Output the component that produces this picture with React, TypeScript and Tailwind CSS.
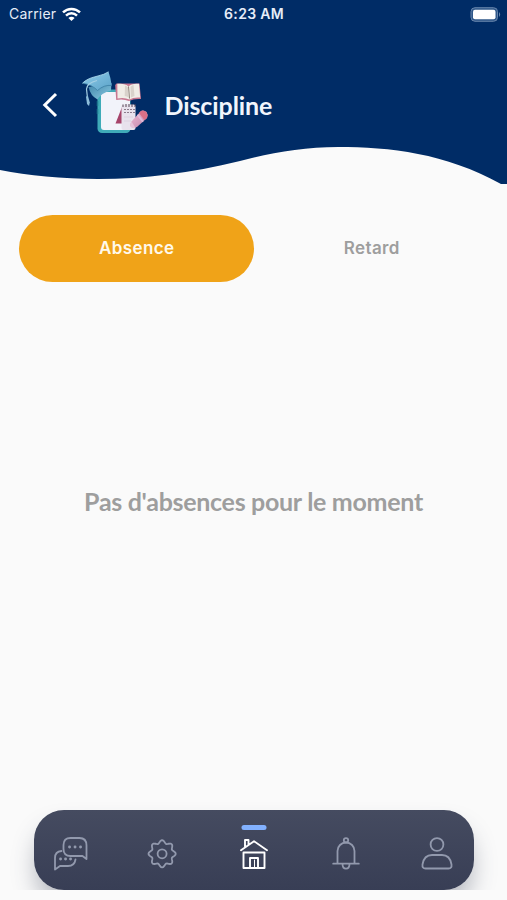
import React from "react";

const GEAR_OUTLINE =
  Array.from({ length: 97 }, (_, i) => {
    const angle = (i / 96) * Math.PI * 2;
    const radius = 12.1 + 1.5 * Math.cos(angle * 8);
    const x = 17.1 + radius * Math.sin(angle);
    const y = 17.8 - radius * Math.cos(angle);
    return `${i === 0 ? "M" : "L"}${x.toFixed(2)} ${y.toFixed(2)}`;
  }).join("") + "Z";

function StatusBar() {
  return (
    <div className="grid h-7 grid-cols-3 items-center pl-[9px] pr-[6px] font-[Inter,'Liberation_Sans',sans-serif] text-[14px] leading-none text-[#e6edf8]">
      <div className="flex items-center gap-[6px]">
        <span className="tracking-[0.2px]">Carrier</span>
        <svg width="19" height="15" viewBox="0 0 19 15" fill="none" stroke="#fff" strokeWidth="2.5">
          <path d="M1 5.400C5.800.8 13.200.8 18 5.400" />
          <path d="M4 8.600c3.200-3 7.800-3 11 0" />
          <path d="M6.400 10.900c1.800-1.500 4.400-1.500 6.200 0L9.500 14z" fill="#fff" stroke="none" />
        </svg>
      </div>
      <span className="-ml-[2px] whitespace-nowrap text-center font-semibold tracking-[0.3px]">6:23 AM</span>
      <svg className="justify-self-end" width="31" height="15" viewBox="0 0 31 15">
        <rect x="1" y=".7" width="26.500" height="13.600" rx="4" fill="#30588a" stroke="#6684ab" />
        <rect x="3" y="2.700" width="22.500" height="9.600" rx="2" fill="#fff" />
        <path d="M29 5v5q2.300-2.500 0-5z" fill="#6684ab" />
      </svg>
    </div>
  );
}

function SchoolArt() {
  return (
    <svg width="70" height="66" viewBox="0 0 70 66">
      <defs>
        <linearGradient id="cap" x1="0" y1="0" x2="1" y2="1">
          <stop offset="0" stopColor="#8fcbe8" />
          <stop offset="1" stopColor="#5ba3c9" />
        </linearGradient>
        <linearGradient id="capBase" x1="0" y1="0" x2="1" y2="1">
          <stop offset="0" stopColor="#3f84a9" />
          <stop offset="1" stopColor="#8ccbe3" />
        </linearGradient>
        <linearGradient id="pencil" x1="0" y1="0" x2="1" y2="1">
          <stop offset="0" stopColor="#f0bcd4" />
          <stop offset="1" stopColor="#c285ab" />
        </linearGradient>
      </defs>
      <rect x="16.500" y="18.500" width="33" height="43.500" rx="4.500" fill="#3fabb8" />
      <rect x="20" y="21" width="29" height="38" rx="3" fill="#f2f3fa" />
      <path d="M16.500 30v5M16.500 38v5" stroke="#1e7790" strokeWidth="1.500" />
      <path d="M41 36 34.500 52.500H42z" fill="#a6436a" />
      <path d="M7.500 16Q9.500 25 16.500 28.500 20 22 30 19.500L30.500 12z" fill="url(#capBase)" />
      <path d="M1.500 12.200Q6 7.500 15 5.500 24 3.500 27.500.8 29.500 6 30.700 14.500 23 13.500 16.500 19.500 11 13.500 1.500 12.200z" fill="url(#cap)" />
      <path d="M1.500 12.200Q11 13.500 16.500 19.500 23 13.500 30.700 14.500" fill="none" stroke="#3b7fa5" strokeWidth=".8" />
      <path d="M1.500 12.200Q6 7.500 15 5.500 24 3.500 27.500.8" fill="none" stroke="#b4e0f1" strokeWidth=".8" />
      <path d="M16 9.500Q6 12 5.500 18l1 9" fill="none" stroke="#a5cfe4" strokeWidth="1.200" />
      <path d="m5 25.500 2-.5 1.800 6.500-.8 3.500-2-2z" fill="#8dbedb" />
      <path d="m34.200 14 1.300-1.500h23l1.500 15.500q-7-.5-12 2-6-2.500-12.800-1z" fill="#c87791" />
      <path d="M36.300 12.800Q44 12 47.500 15.500 51 12 58 12.800l1.200 13.700q-7-.5-10.700 2-5.500-2.500-12-1z" fill="#f0ece6" />
      <path d="m47.500 15.500 1 12" stroke="#8c8279" />
      <path d="M44 14.500q2 .5 3 2l.7 10q-1.700-1.200-4-1.500zM49.500 16q1-1.500 3-2l1 11-3.500 1.500z" fill="#cfc7bf" opacity=".7" />
      <rect x="40.500" y="33.500" width="14" height="25.500" rx="2" fill="#e8e2ed" />
      <path d="M42 36v-2.500m3 2.500v-3m3 3v-3m3 3v-3m3 3v-3" stroke="#554454" />
      <path d="M43 38.500h11M43 41.500h11" stroke="#8c7c8d" strokeDasharray="2 1" />
      <path d="M43 46h9M43 50h7" stroke="#d3cbd9" strokeWidth=".6" />
      <path d="M50.500 50.500 60 40q2.500-1.500 5.500 1 2 3 .5 6L56 56q-3 1.500-6 0-1.500-2.500.5-5.500z" fill="url(#pencil)" />
      <path d="M58 42l2-2q2.500-1.500 5.500 1 2 3 .5 6l-2.500 2.200z" fill="#da7188" />
      <path d="m56.500 43.700 5.500 7" stroke="#e0bddb" strokeWidth="1.800" />
      <path d="m50.500 50.500 4 6.500q-2.500.5-4.500-1-1.500-2.500.5-5.500z" fill="#e6c3d9" />
    </svg>
  );
}

function Header() {
  return (
    <header className="relative h-[185px] shrink-0">
      <svg className="absolute inset-0" width="507" height="185" viewBox="0 0 507 185">
        <path d="M0 0H507V184H501C445 153 390 147 338 147C303 147 270 153 240 161C190 173 145 179 98 179C62 179 28 175.500 0 170Z" fill="#002c66" />
      </svg>
      <div className="relative">
        <StatusBar />
        <div className="flex items-center pl-[42px] pt-[43px]">
          <svg className="mt-[2px]" width="16" height="26" viewBox="0 0 16 26" fill="none" stroke="#fff" strokeWidth="3">
            <path d="M14 2 2.800 13 14 24" />
          </svg>
          <div className="ml-[23px]">
            <SchoolArt />
          </div>
          <h1 className="ml-[13.500px] mt-[2px] font-[Lato,sans-serif] text-[25px] font-bold leading-8 tracking-[-0.1px] text-[#f1f5fc]">Discipline</h1>
        </div>
      </div>
    </header>
  );
}

function Icon({ children, active = false }: { children: React.ReactNode; active?: boolean }) {
  return (
    <button className={active ? "text-white" : "text-[#9299ad]"}>
      <svg width="36" height="36" viewBox="0 0 36 36" fill="none" stroke="currentColor" strokeWidth="1.800" strokeLinecap="round" strokeLinejoin="round">
        {children}
      </svg>
    </button>
  );
}

function BottomNav() {
  return (
    <div className="mb-[10px] shrink-0 overflow-hidden pl-[34px] pr-[33px] pt-[30px]">
      <nav className="relative flex h-20 items-start justify-between rounded-[30px] bg-linear-to-b from-[#454b60] to-[#383e55] px-[19px] pt-[26px] shadow-[0_16px_24px_-3px_rgba(56,62,85,0.38)]">
        <Icon>
          <path d="M17.500 2h9Q33.500 2 33.500 9.500V23l-4-3H17.500Q10.500 20 10.500 13V9q0-7 7-7z" />
          <path d="M8.500 15Q2 15.500 2 22v11.500l5-3.500h8q6.500 0 7.500-6.500" />
          <path d="M16.500 11h.1m5.400 0h.1m5.400 0h.1M7.500 23h.1m4.900 0h.1m4.900 0h.1" strokeWidth="2.800" />
        </Icon>
        <Icon>
          <circle cx="17.100" cy="17.800" r="4.500" />
          <path d={GEAR_OUTLINE} />
        </Icon>
        <Icon active>
          <path d="M5 14.200 18 5.200l13 9M9 11V4h3.500v4.500" strokeWidth="1.900" />
          <path d="M7.500 16.500h21V32h-21zM14 32V22h8v10" strokeWidth="1.900" />
          <path d="M18.500 24v8" strokeWidth="1" />
        </Icon>
        <Icon>
          <circle cx="18" cy="4.300" r="2.200" />
          <path d="M9.500 27.500V15a8.500 8.500 0 0 1 17 0v12.500M5.200 27.700h25.600M14.500 28q0 4.700 3.500 4.700t3.500-4.700" />
        </Icon>
        <Icon>
          <circle cx="18" cy="8.500" r="6.400" />
          <path d="M6.500 32.500Q3 32.500 3.500 28.500 5 19 13 19h10q8 0 9.500 9.500Q33 32.500 29.500 32.500z" />
        </Icon>
        <span className="absolute left-1/2 top-[14.500px] h-[5px] w-[25px] -translate-x-1/2 rounded-full bg-[#82b1ff]" />
      </nav>
    </div>
  );
}

export default function App() {
  return (
    <div className="flex h-[900px] w-[507px] flex-col overflow-hidden bg-[#fafafa]">
      <Header />
      <div className="mx-[19px] mt-[30px] grid h-[67px] shrink-0 grid-cols-2 font-[Inter,'Liberation_Sans',sans-serif] text-[17px] font-semibold tracking-[0.4px]">
        <button className="rounded-full bg-[#f0a318] pl-px text-[#fff9ec]">Absence</button>
        <button className="pl-[2px] text-[#9e9e9e]">Retard</button>
      </div>
      <main className="flex min-h-0 flex-1 justify-center pt-[203px]">
        <p className="whitespace-nowrap font-[Lato,sans-serif] text-[25px] font-bold leading-8 tracking-[-0.3px] text-[#9e9e9e]">Pas d'absences pour le moment</p>
      </main>
      <BottomNav />
    </div>
  );
}
